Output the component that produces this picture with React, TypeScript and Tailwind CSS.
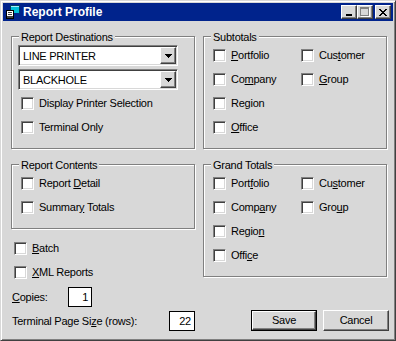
import React from "react";

// classic 3D frames
const raised =
  "border border-t-white border-l-white border-r-[#404040] border-b-[#404040] shadow-[inset_-1px_-1px_0_#808080]";
const sunken =
  "border border-t-[#808080] border-l-[#808080] border-r-white border-b-white shadow-[inset_1px_1px_0_#404040,inset_-1px_-1px_0_#d8d8d8]";

function Group({
  title,
  className = "",
  children,
}: {
  title: string;
  className?: string;
  children?: React.ReactNode;
}) {
  return (
    <div
      className={`relative w-[184px] border border-[#808080] shadow-[1px_1px_0_#fff,inset_1px_1px_0_#fff] ${className}`}
    >
      <span className="absolute left-[7px] top-[-6px] bg-[#d8d8d8] pl-[2px] pr-[2px] leading-[13px] whitespace-nowrap">
        {title}
      </span>
      {children}
    </div>
  );
}

function Check({ label }: { label: React.ReactNode }) {
  return (
    <div className="flex items-center h-[13px]">
      <span className={`w-[13px] h-[13px] shrink-0 bg-white ${sunken}`} />
      <span className="ml-[5px] leading-[13px] whitespace-nowrap">{label}</span>
    </div>
  );
}

function Combo({ value, className = "" }: { value: string; className?: string }) {
  return (
    <div className={`flex items-center w-[160px] h-[21px] bg-white ${sunken} ${className}`}>
      <span className="flex-1 pl-[4px] pt-[1px] leading-[13px] whitespace-nowrap">{value}</span>
      <span
        className={`flex items-center justify-center w-[16px] h-[17px] mr-[1px] bg-[#d8d8d8] ${raised}`}
      >
        <svg width="7" height="4" viewBox="0 0 7 4" shapeRendering="crispEdges">
          <path d="M0 0h7v1H6v1H5v1H4v1H3V3H2V2H1V1H0z" fill="#000" />
        </svg>
      </span>
    </div>
  );
}

function TitleButton({ children, className = "" }: { children: React.ReactNode; className?: string }) {
  return (
    <span
      className={`flex items-center justify-center w-[16px] h-[14px] bg-[#d8d8d8] border border-t-white border-l-white border-r-[#404040] border-b-[#404040] shadow-[inset_-1px_-1px_0_#808080] ${className}`}
    >
      {children}
    </span>
  );
}

export default function App() {
  return (
    <div className="w-[396px] h-[341px] bg-[#d8d8d8] text-black text-[11px] tracking-[-0.25px] font-['Liberation_Sans',Arial,sans-serif] border border-t-[#d8d8d8] border-l-[#d8d8d8] border-r-[#404040] border-b-[#404040] shadow-[inset_1px_1px_0_#fff,inset_-1px_-1px_0_#808080] p-[2px]">
      {/* Title bar */}
      <div className="flex items-center h-[18px] bg-[#00238c] pl-[2px] pr-[2px]">
        <svg width="16" height="16" viewBox="0 0 16 16" shapeRendering="crispEdges" className="shrink-0">
          <path d="M5 1h9l1 1v7H6L5 8z" fill="#00c0d8" />
          <path d="M6 2h8v1H6z" fill="#a8ecf8" />
          <path d="M5 1h9v1H5zM5 1h1v8H5zM14 1h1v9H14z" fill="#004060" />
          <path d="M1 6h8v9H1z" fill="#fff" />
          <path d="M1 6h8v1H1zM1 6h1v9H1zM8 6h1v9H8zM1 14h8v1H1z" fill="#000" />
          <path d="M3 8h4v1H3zM3 10h4v1H3zM2 12h6v2H2z" fill="#404040" />
        </svg>
        <span className="ml-[2px] flex-1 text-white font-bold text-[12px] tracking-[0px] leading-[18px] whitespace-nowrap">
          Report Profile
        </span>
        <TitleButton>
          <span className="w-[6px] h-[2px] bg-black mt-[6px] mr-[1px]" />
        </TitleButton>
        <TitleButton>
          <svg width="10" height="10" viewBox="0 0 10 10" shapeRendering="crispEdges">
            <path d="M1 1h9v10H1z" fill="#fff" />
            <path d="M0 0h9v9H0z" fill="#d8d8d8" />
            <path d="M0 0h9v2H0zM0 0h1v9H0zM8 0h1v9H8zM0 8h9v1H0z" fill="#808080" />
          </svg>
        </TitleButton>
        <TitleButton className="ml-[2px]">
          <svg width="8" height="7" viewBox="0 0 8 7" shapeRendering="crispEdges">
            <path
              d="M0 0h2v1h1v1h2V1h1V0h2v1H7v1H6v1H5v1h1v1h1v1h1v1H6V6H5V5H3v1H2v1H0V6h1V5h1V4h1V3H2V2H1V1H0z"
              fill="#000"
            />
          </svg>
        </TitleButton>
      </div>

      {/* Body */}
      <div className="flex pl-[8px] pt-[15px]">
        {/* Left column */}
        <div className="flex flex-col w-[184px]">
          <Group title="Report Destinations" className="h-[113px]">
            <div className="flex flex-col pt-[8px] pl-[6px]">
              <Combo value="LINE PRINTER" />
              <Combo value="BLACKHOLE" className="mt-[3px]" />
              <div className="flex flex-col gap-[11px] pl-[3px] mt-[7px]">
                <Check label="Display Printer Selection" />
                <Check label="Terminal Only" />
              </div>
            </div>
          </Group>

          <Group title="Report Contents" className="h-[65px] mt-[15px]">
            <div className="flex flex-col gap-[11px] pt-[12px] pl-[9px]">
              <Check label={<>Report <u>D</u>etail</>} />
              <Check label={<>Summar<u>y</u> Totals</>} />
            </div>
          </Group>

          <div className="flex flex-col gap-[11px] mt-[13px] ml-[3px]">
            <Check label={<><u>B</u>atch</>} />
            <Check label={<><u>X</u>ML Reports</>} />
          </div>

          <div className="flex items-center h-[20px] mt-[8px] ml-[1px]">
            <span className="w-[56px] leading-[13px]">
              <u>C</u>opies:
            </span>
            <span className="w-[24px] h-[20px] bg-white border border-black text-right pr-[3px] leading-[18px]">
              1
            </span>
          </div>

          <div className="flex items-center h-[20px] mt-[4px] ml-[1px]">
            <span className="w-[159px] leading-[13px] whitespace-nowrap">
              Terminal Page Si<u>z</u>e (rows):
            </span>
            <span className="w-[26px] h-[20px] bg-white border border-black text-right pr-[3px] leading-[18px]">
              22
            </span>
          </div>
        </div>

        {/* Right column */}
        <div className="flex flex-col w-[184px] ml-[8px]">
          <Group title="Subtotals" className="h-[113px]">
            <div className="grid grid-cols-[88px_auto] gap-y-[11px] pt-[12px] pl-[9px]">
              <Check label={<><u>P</u>ortfolio</>} />
              <Check label={<>Cus<u>t</u>omer</>} />
              <Check label={<>Co<u>m</u>pany</>} />
              <Check label={<><u>G</u>roup</>} />
              <Check label={<>Re<u>g</u>ion</>} />
              <div />
              <Check label={<><u>O</u>ffice</>} />
            </div>
          </Group>

          <Group title="Grand Totals" className="h-[113px] mt-[15px]">
            <div className="grid grid-cols-[88px_auto] gap-y-[11px] pt-[12px] pl-[9px]">
              <Check label={<>Port<u>f</u>olio</>} />
              <Check label={<>Cu<u>s</u>tomer</>} />
              <Check label={<>Comp<u>a</u>ny</>} />
              <Check label={<>Gro<u>u</u>p</>} />
              <Check label={<>Regio<u>n</u></>} />
              <div />
              <Check label={<>Offi<u>c</u>e</>} />
            </div>
          </Group>

          <div className="flex gap-[6px] mt-[33px] pl-[48px]">
            <div className="w-[66px] h-[21px] shrink-0 border border-black">
              <div className={`flex items-center justify-center w-full h-full leading-[13px] ${raised}`}>
                Save
              </div>
            </div>
            <div className={`flex items-center justify-center w-[66px] h-[21px] shrink-0 leading-[13px] ${raised}`}>
              Cancel
            </div>
          </div>
        </div>
      </div>
    </div>
  );
}
